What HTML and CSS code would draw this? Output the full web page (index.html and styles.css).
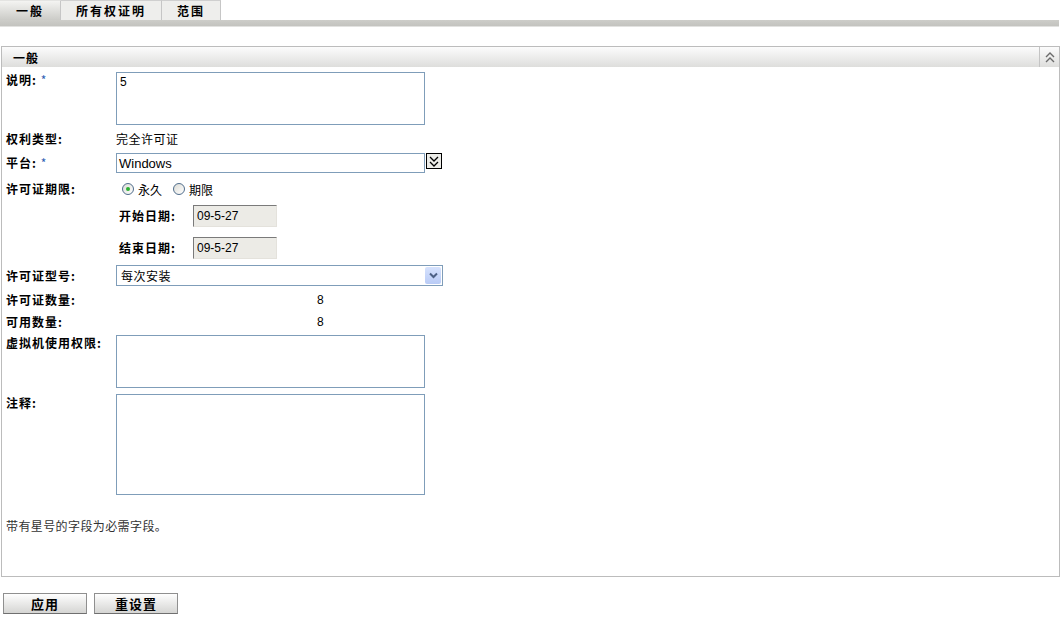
FILE: index.html
```html
<!DOCTYPE html>
<html lang="zh-CN">

<head>
    <meta charset="UTF-8">
    <meta name="viewport" content="width=device-width, initial-scale=1.0">
    <title>一般</title>
    <link rel="stylesheet" href="styles.css">
</head>

<body>
    <div class="tabs">
        <div class="tab tab-1 active">一般</div>
        <div class="tab tab-2">所有权证明</div>
        <div class="tab tab-3">范围</div>
    </div>
    <div class="tab-bar"></div>

    <div class="section">
        <div class="section-head">
            <span class="section-title">一般</span>
            <span class="collapse">
                <svg width="10" height="11" viewBox="0 0 10 11">
                    <path d="M1 5 L5 1 L9 5 M1 10 L5 6 L9 10" fill="none" stroke="#6b6b6b" stroke-width="1.4" />
                </svg>
            </span>
        </div>

        <div class="section-body">
            <div class="row">
                <label class="lbl">说明: <span class="req">*</span></label>
                <textarea class="area area-sm">5</textarea>
            </div>

            <div class="row">
                <span class="lbl">权利类型:</span>
                <span class="value">完全许可证</span>
            </div>

            <div class="row row-mid">
                <label class="lbl">平台: <span class="req">*</span></label>
                <div class="select select-platform">Windows</div>
                <span class="pick-btn">
                    <svg width="10" height="11" viewBox="0 0 10 11">
                        <path d="M1 1 L5 5 L9 1 M1 6 L5 10 L9 6" fill="none" stroke="#000" stroke-width="1.3" />
                    </svg>
                </span>
            </div>

            <div class="row row-period">
                <span class="lbl">许可证期限:</span>
                <div class="radios">
                    <span class="radio checked"></span><span class="radio-text">永久</span>
                    <span class="radio"></span><span class="radio-text">期限</span>
                </div>
            </div>

            <div class="dates">
                <div class="date-row date-start">
                    <span class="sub-lbl">开始日期:</span>
                    <input class="date" type="text" value="09-5-27" readonly>
                </div>
                <div class="date-row date-end">
                    <span class="sub-lbl">结束日期:</span>
                    <input class="date" type="text" value="09-5-27" readonly>
                </div>
            </div>

            <div class="row row-mid">
                <span class="lbl">许可证型号:</span>
                <div class="select select-model">
                    <span class="select-text">每次安装</span>
                    <span class="xp-arrow">
                        <svg width="9" height="7" viewBox="0 0 9 7">
                            <path d="M1 1.5 L4.5 5 L8 1.5" fill="none" stroke="#4d6185" stroke-width="2" />
                        </svg>
                    </span>
                </div>
            </div>

            <div class="row">
                <span class="lbl">许可证数量:</span>
                <span class="num">8</span>
            </div>

            <div class="row">
                <span class="lbl">可用数量:</span>
                <span class="num">8</span>
            </div>

            <div class="row row-vm">
                <span class="lbl">虚拟机使用权限:</span>
                <textarea class="area area-sm"></textarea>
            </div>

            <div class="row">
                <span class="lbl lbl-note">注释:</span>
                <textarea class="area area-lg"></textarea>
            </div>

            <p class="hint">带有星号的字段为必需字段。</p>
        </div>
    </div>

    <div class="actions">
        <button class="btn" type="button">应用</button>
        <button class="btn" type="button">重设置</button>
    </div>
</body>

</html>
```

FILE: styles.css
```css
/* General Styles */
body {
    margin: 0;
    font-family: "Liberation Sans", "Noto Sans CJK SC", sans-serif;
    font-size: 12px;
    color: #000;
    background-color: #fff;
}

/* Tabs */
.tabs {
    display: flex;
    height: 20px;
}

.tab {
    box-sizing: border-box;
    height: 20px;
    line-height: 19px;
    text-align: center;
    font-family: "Noto Sans CJK SC", sans-serif;
    font-weight: bold;
    letter-spacing: 2px;
    background-color: #eeeeec;
    border-top: 1px solid #cfcfcf;
    border-right: 1px solid #c6c6c6;
}

.tab-1 {
    width: 61px;
}

.tab-2 {
    width: 101px;
}

.tab-3 {
    width: 59px;
}

.tab.active {
    background: linear-gradient(#f4f4f2, #cbcbc7);
    border-top-color: #e4e4e2;
}

.tab-bar {
    height: 6px;
    margin-right: 3px;
    background: linear-gradient(#cdcdc9, #c3c3bf);
    border-bottom: 1px solid #e2e2e0;
}

/* Section box */
.section {
    margin: 19px 2px 0 1px;
    border: 1px solid #bcbcbc;
}

.section-head {
    display: flex;
    align-items: center;
    height: 20px;
    background: linear-gradient(#fcfcfc, #dededc);
}

.section-title {
    padding-left: 11px;
    font-family: "Noto Sans CJK SC", sans-serif;
    font-weight: bold;
    letter-spacing: 1px;
}

.collapse {
    display: flex;
    align-items: center;
    justify-content: center;
    margin-left: auto;
    width: 19px;
    height: 20px;
    border-left: 1px solid #c4c4c4;
}

.section-body {
    padding: 5px 0 42px 0;
}

/* Form rows */
.row {
    display: flex;
    align-items: flex-start;
    margin-top: 6px;
}

.row:first-child {
    margin-top: 0;
}

.row-mid {
    align-items: center;
}

.row-period {
    margin-top: 8px;
}

.row-vm {
    margin-top: 5px;
}

.lbl {
    flex: none;
    box-sizing: border-box;
    width: 114px;
    padding-left: 4px;
    line-height: 16px;
    font-family: "Noto Sans CJK SC", sans-serif;
    font-weight: bold;
    letter-spacing: 1px;
    white-space: nowrap;
}

.lbl-note {
    padding-top: 1px;
}

.req {
    color: #2f5fb3;
    font-weight: normal;
}

.value {
    line-height: 16px;
    font-family: "Noto Sans CJK SC", sans-serif;
    letter-spacing: 0.5px;
}

.num {
    padding-left: 201px;
    line-height: 16px;
}

.area {
    box-sizing: border-box;
    width: 309px;
    margin: 0;
    padding: 2px 3px;
    border: 1px solid #7f9db9;
    font-family: "Liberation Sans", "Noto Sans CJK SC", sans-serif;
    font-size: 12px;
    resize: none;
}

.area-sm {
    height: 53px;
}

.area-lg {
    height: 101px;
}

/* Selects */
.select {
    box-sizing: border-box;
    display: flex;
    align-items: center;
    border: 1px solid #7f9db9;
    background-color: #fff;
}

.select-platform {
    width: 309px;
    height: 20px;
    padding-left: 2px;
    font-size: 13px;
}

.pick-btn {
    box-sizing: border-box;
    display: flex;
    align-items: center;
    justify-content: center;
    align-self: flex-start;
    width: 16px;
    height: 16px;
    margin-left: 1px;
    border: 1px solid #000;
    background-color: #ecece8;
}

.select-model {
    width: 327px;
    height: 21px;
    padding: 1px;
}

.select-text {
    flex: 1;
    padding-left: 3px;
    font-family: "Noto Sans CJK SC", sans-serif;
    letter-spacing: 0.5px;
}

.xp-arrow {
    display: flex;
    align-items: center;
    justify-content: center;
    width: 16px;
    height: 17px;
    border-radius: 2px;
    background: linear-gradient(#d6e2fd, #b9cbf6);
}

/* Radios */
.radios {
    display: flex;
    align-items: center;
    height: 16px;
    padding-left: 6px;
    font-family: "Noto Sans CJK SC", sans-serif;
}

.radio {
    box-sizing: border-box;
    display: flex;
    align-items: center;
    justify-content: center;
    width: 12px;
    height: 12px;
    border: 1px solid #506d8c;
    border-radius: 50%;
    background: linear-gradient(135deg, #dcdcd6, #ffffff);
}

.radio.checked::after {
    content: "";
    width: 4px;
    height: 4px;
    border-radius: 50%;
    background-color: #2ab030;
}

.radio-text {
    margin: 0 11px 0 4px;
}

/* Date fields */
.dates {
    margin-left: 114px;
}

.date-row {
    display: flex;
    align-items: center;
}

.date-start {
    margin-top: 8px;
}

.date-end {
    margin-top: 10px;
}

.sub-lbl {
    box-sizing: border-box;
    width: 77px;
    padding-left: 3px;
    line-height: 16px;
    font-family: "Noto Sans CJK SC", sans-serif;
    font-weight: bold;
    letter-spacing: 1px;
}

.date {
    box-sizing: border-box;
    width: 84px;
    height: 22px;
    margin: 0;
    padding: 0 3px;
    border: 1px solid;
    border-color: #7a7a7a #e4e2dc #e4e2dc #7a7a7a;
    background-color: #ecebe6;
    font-family: "Liberation Sans", sans-serif;
    font-size: 12px;
}

.hint {
    margin: 23px 0 0 0;
    padding-left: 4px;
    line-height: 16px;
    color: #333;
    font-family: "Noto Sans CJK SC", sans-serif;
    letter-spacing: 0.4px;
}

/* Buttons */
.actions {
    display: flex;
    gap: 7px;
    margin-top: 16px;
    padding-left: 3px;
}

.btn {
    box-sizing: border-box;
    width: 84px;
    height: 21px;
    padding: 0;
    border: 1px solid #8f8f8f;
    border-bottom-color: #6f6f6f;
    background: linear-gradient(#fefefe, #d5d5d3);
    font-family: "Noto Sans CJK SC", sans-serif;
    font-size: 13px;
    font-weight: bold;
    letter-spacing: 1px;
    color: #000;
    cursor: pointer;
}
```
